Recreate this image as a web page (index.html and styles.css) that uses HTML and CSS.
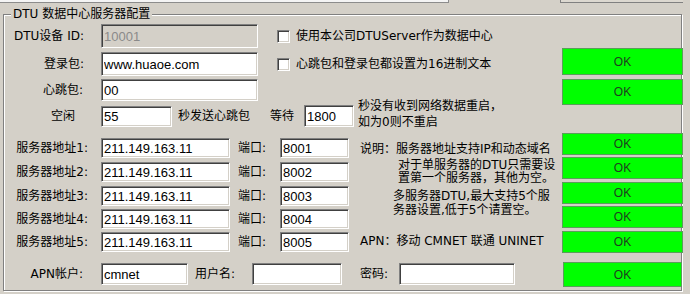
FILE: index.html
```html
<!DOCTYPE html>
<html lang="zh-CN">
<head>
    <meta charset="UTF-8">
    <title>DTU 数据中心服务器配置</title>
    <link rel="stylesheet" href="styles.css">
</head>
<body>
    <div class="topbar">
        <span class="top-edit"></span>
        <span class="top-btn"></span>
    </div>

    <div class="group">
        <span class="legend">DTU 数据中心服务器配置</span>

        <div class="main">
            <div class="row r1">
                <span class="lbl">DTU设备 ID:</span>
                <input class="edit w-long" type="text" value="10001" disabled>
                <label class="check"><span class="box"></span>使用本公司DTUServer作为数据中心</label>
            </div>
            <div class="row r2">
                <span class="lbl">登录包:</span>
                <input class="edit w-long" type="text" value="www.huaoe.com">
                <label class="check"><span class="box"></span>心跳包和登录包都设置为16进制文本</label>
            </div>
            <div class="row r3">
                <span class="lbl">心跳包:</span>
                <input class="edit w-long" type="text" value="00">
            </div>
            <div class="row r4">
                <span class="lbl lbl-idle">空闲</span>
                <input class="edit w-idle" type="text" value="55">
                <span class="txt t-send">秒发送心跳包</span>
                <span class="txt t-wait">等待</span>
                <input class="edit w-wait" type="text" value="1800">
                <span class="txt t-restart">秒没有收到网络数据重启，<br>如为0则不重启</span>
            </div>

            <div class="servers">
                <div class="server-list">
                    <div class="row srv">
                        <span class="lbl lbl-srv">服务器地址1:</span>
                        <input class="edit w-addr" type="text" value="211.149.163.11">
                        <span class="txt t-port">端口:</span>
                        <input class="edit w-port" type="text" value="8001">
                    </div>
                    <div class="row srv">
                        <span class="lbl lbl-srv">服务器地址2:</span>
                        <input class="edit w-addr" type="text" value="211.149.163.11">
                        <span class="txt t-port">端口:</span>
                        <input class="edit w-port" type="text" value="8002">
                    </div>
                    <div class="row srv">
                        <span class="lbl lbl-srv">服务器地址3:</span>
                        <input class="edit w-addr" type="text" value="211.149.163.11">
                        <span class="txt t-port">端口:</span>
                        <input class="edit w-port" type="text" value="8003">
                    </div>
                    <div class="row srv">
                        <span class="lbl lbl-srv">服务器地址4:</span>
                        <input class="edit w-addr" type="text" value="211.149.163.11">
                        <span class="txt t-port">端口:</span>
                        <input class="edit w-port" type="text" value="8004">
                    </div>
                    <div class="row srv">
                        <span class="lbl lbl-srv">服务器地址5:</span>
                        <input class="edit w-addr" type="text" value="211.149.163.11">
                        <span class="txt t-port">端口:</span>
                        <input class="edit w-port" type="text" value="8005">
                    </div>
                </div>
                <div class="notes">
                    <p class="note n1">说明：服务器地址支持IP和动态域名</p>
                    <p class="note n2">对于单服务器的DTU只需要设置第一个服务器，其他为空。</p>
                    <p class="note n3">多服务器DTU,最大支持5个服务器设置,低于5个请置空。</p>
                    <p class="note n4">APN：移动 CMNET 联通 UNINET</p>
                </div>
            </div>

            <div class="row apn">
                <span class="lbl lbl-apn">APN帐户:</span>
                <input class="edit w-apn" type="text" value="cmnet">
                <span class="txt t-user">用户名:</span>
                <input class="edit w-user" type="text" value="">
                <span class="txt t-pass">密码:</span>
                <input class="edit w-pass" type="text" value="">
            </div>
        </div>

        <!-- botones de estado -->
        <div class="oks">
            <button class="ok b1">OK</button>
            <button class="ok b2">OK</button>
            <button class="ok b3">OK</button>
            <button class="ok b4">OK</button>
            <button class="ok b5">OK</button>
            <button class="ok b6">OK</button>
            <button class="ok b7">OK</button>
            <button class="ok b8">OK</button>
        </div>
    </div>
</body>
</html>
```

FILE: styles.css
```css
* {
    box-sizing: border-box;
}
body {
    margin: 0;
    width: 690px;
    height: 294px;
    overflow: hidden;
    background-color: #d4d0c8;
    font-family: "DejaVu Sans", "Noto Sans CJK SC", sans-serif;
    font-size: 12px;
    line-height: 14px;
    color: #000;
}
.topbar {
    display: flex;
    height: 3px;
}
.top-edit {
    width: 449px;
    background-color: #f4f4f4;
    border-right: 1px solid #8c8c8c;
    border-bottom: 1px solid #8c8c8c;
}
.top-btn {
    width: 123px;
    margin-left: 111px;
    background-color: #dcd8d0;
    border-left: 1px solid #808080;
    border-bottom: 1px solid #808080;
}
.group {
    position: relative;
    display: flex;
    width: 679px;
    height: 277px;
    margin: 11px 0 0 3px;
    border: 1px solid #808080;
    box-shadow: inset 1px 1px 0 #fff, 1px 1px 0 #fff;
}
.legend {
    position: absolute;
    left: 7px;
    top: -8px;
    padding: 0 2px;
    background-color: #d4d0c8;
    white-space: nowrap;
}
.main {
    width: 558px;
    flex-shrink: 0;
}
.row {
    display: flex;
    align-items: center;
    white-space: nowrap;
}
.lbl {
    width: 97px;
    flex-shrink: 0;
    text-align: right;
    padding-right: 17px;
}
.lbl-idle {
    padding-right: 26px;
}
.lbl-srv {
    padding-right: 13px;
}
.lbl-apn {
    padding-right: 18px;
}
.txt {
    flex-shrink: 0;
}
.edit {
    flex-shrink: 0;
    margin: 0;
    padding: 0 2px;
    font-family: "Liberation Sans", "Noto Sans CJK SC", sans-serif;
    font-size: 13px;
    color: #000;
    background-color: #fff;
    border: 1px solid;
    border-color: #808080 #fff #fff #808080;
    box-shadow: inset 1px 1px 0 #404040, inset -1px -1px 0 #d4d0c8;
    outline: none;
}
.edit:disabled {
    background-color: #d4d0c8;
    color: #8a8a8a;
}
.check {
    display: flex;
    align-items: center;
    margin-left: 19px;
}
.box {
    width: 13px;
    height: 13px;
    margin-right: 6px;
    background-color: #fff;
    border: 1px solid;
    border-color: #808080 #fff #fff #808080;
    box-shadow: inset 1px 1px 0 #404040, inset -1px -1px 0 #d4d0c8;
}

/* filas superiores */
.r1 {
    margin-top: 9px;
    height: 24px;
}
.r2 {
    margin-top: 4px;
    height: 24px;
}
.r3 {
    margin-top: 3px;
    height: 22px;
}
.r4 {
    margin-top: 4px;
    height: 22px;
}
.w-long {
    width: 157px;
    height: 100%;
}
.r3 .lbl {
    padding-right: 18px;
}
.w-idle {
    width: 71px;
    height: 21px;
}
.t-send {
    width: 92px;
    margin-left: 6px;
}
.t-wait {
    width: 34px;
}
.w-wait {
    width: 50px;
    height: 22px;
}
.t-restart {
    align-self: flex-start;
    margin-top: -7px;
    margin-left: 4px;
    line-height: 16px;
}

/* servidores */
.servers {
    display: flex;
    margin-top: 11px;
}
.server-list {
    width: 345px;
    flex-shrink: 0;
}
.srv {
    height: 20px;
    margin-top: 3px;
}
.srv:first-child {
    margin-top: 0;
}
.srv:nth-child(2),
.srv:nth-child(3) {
    margin-top: 4px;
}
.w-addr {
    width: 129px;
    height: 20px;
}
.t-port {
    width: 42px;
    margin-left: 8px;
}
.w-port {
    width: 69px;
    height: 20px;
}
.notes {
    margin-left: 11px;
}
.note {
    margin: 0;
    white-space: normal;
}
.n1 {
    margin-top: 4px;
    white-space: nowrap;
}
.n2 {
    width: 162px;
    margin: 3px 0 0 38px;
    line-height: 13px;
}
.n3 {
    width: 162px;
    margin: 4px 0 0 33px;
    line-height: 14px;
}
.n4 {
    margin-top: 17px;
    white-space: nowrap;
}

/* APN */
.apn {
    margin-top: 11px;
    height: 22px;
}
.w-apn {
    width: 87px;
    height: 22px;
}
.t-user {
    width: 57px;
    margin-left: 7px;
}
.w-user {
    width: 90px;
    height: 22px;
}
.t-pass {
    width: 39px;
    margin-left: 18px;
}
.w-pass {
    width: 116px;
    height: 22px;
}

/* botones OK */
.oks {
    display: flex;
    flex-direction: column;
    width: 121px;
    flex-shrink: 0;
}
.ok {
    margin: 0;
    padding: 0;
    height: 22px;
    background-color: #00ff00;
    border: 1px solid #5a9e5a;
    color: #1f3f1f;
    font-family: "Liberation Sans", sans-serif;
    font-size: 12px;
}
.b1 {
    margin-top: 33px;
    height: 27px;
}
.b2 {
    margin-top: 4px;
    height: 26px;
}
.b3 {
    margin-top: 28px;
}
.b4,
.b6 {
    margin-top: 2px;
}
.b5,
.b7 {
    margin-top: 3px;
}
.b8 {
    margin: 9px 0 0 1px;
    width: 119px;
    height: 25px;
}
```
